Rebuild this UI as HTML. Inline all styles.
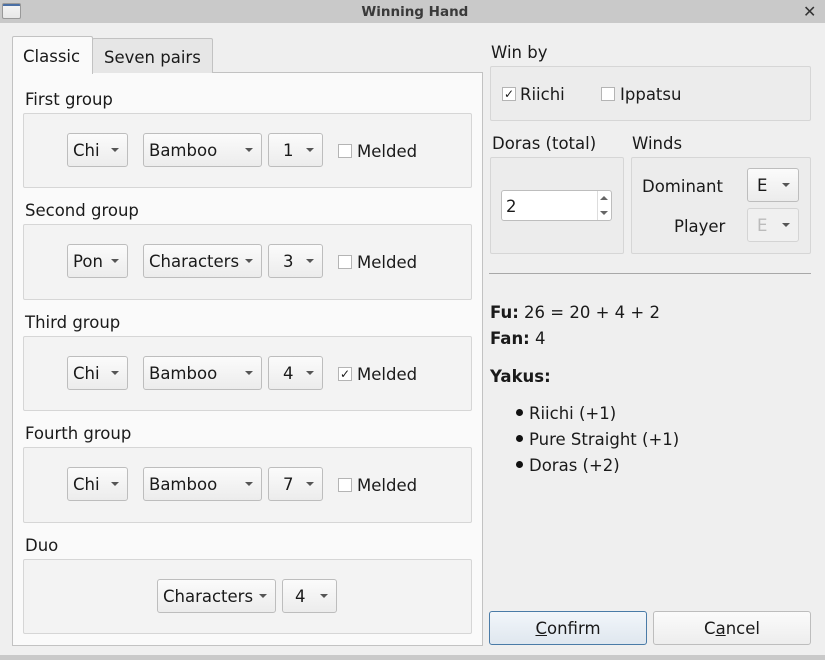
<!DOCTYPE html>
<html><head><meta charset="utf-8"><style>
*{box-sizing:border-box;margin:0;padding:0}
body{width:825px;height:660px;overflow:hidden;background:#efefef;font-family:"DejaVu Sans","Liberation Sans",sans-serif;font-size:16.5px;color:#1a1a1a;position:relative}
.a{position:absolute}
.t{position:absolute;white-space:nowrap;line-height:20px;margin-top:1px}
.box{position:absolute;border:1px solid #d6d6d6;border-radius:2px;background:#f3f3f3}
.cb{position:absolute;height:34px;border:1px solid #bdbdbd;border-radius:3px;background:linear-gradient(#fbfbfb,#ececec);line-height:34px;padding-left:5px;white-space:nowrap}
.cb:after{content:"";position:absolute;right:8px;top:14px;border-left:4px solid transparent;border-right:4px solid transparent;border-top:4px solid #555}
.chk{position:absolute;width:14px;height:14px;border:1px solid #b4b4b4;background:#fff;font-size:12px;line-height:12px;text-align:center}
.btn{position:absolute;height:34px;border:1px solid #bdbdbd;border-radius:3px;background:linear-gradient(#fbfbfb,#ededed);text-align:center;line-height:34px}
.bul{display:inline-block;width:7px;height:7px;border-radius:50%;background:#111;margin-right:6px;vertical-align:middle;position:relative;top:-2px}
</style></head><body>
<div class="a" style="left:0;top:0;width:825px;height:23px;background:#c9c9c9"></div>
<div class="a" style="left:2px;top:3px;width:19px;height:16px;border:1px solid #999;border-radius:2px;background:linear-gradient(#4a6fa5 0,#4a6fa5 2px,#f4f4f4 2px,#e8e8e8)"></div>
<div class="t" style="left:0;width:825px;text-align:center;top:2px;font-weight:bold;font-size:13.5px;color:#3a3a3a;margin:0">&nbsp;Winning Hand</div>
<div class="t" style="left:803px;top:1px;font-weight:bold;font-size:16px;color:#333">✕</div>
<div class="a" style="left:0;top:655px;width:825px;height:5px;background:#c9c9c9"></div>

<div class="a" style="left:12px;top:72px;width:471px;height:574px;border:1px solid #c2c2c2;background:#fafafa"></div>
<div class="a" style="left:92px;top:38px;width:121px;height:35px;border:1px solid #c2c2c2;border-bottom:none;background:#e6e6e6;border-radius:2px 2px 0 0"></div>
<div class="a" style="left:12px;top:36px;width:81px;height:38px;border:1px solid #c2c2c2;border-bottom:none;background:#fafafa;border-radius:2px 2px 0 0"></div>
<div class="t" style="left:23px;top:46px">Classic</div>
<div class="t" style="left:104px;top:47px">Seven pairs</div>

<div class="t" style="left:25px;top:89px">First group</div>
<div class="box" style="left:23px;top:113px;width:449px;height:75px"></div>
<div class="cb" style="left:67px;top:133px;width:61px">Chi</div>
<div class="cb" style="left:143px;top:133px;width:119px">Bamboo</div>
<div class="cb" style="left:268px;top:133px;width:55px;padding-left:14px">1</div>
<div class="chk" style="left:338px;top:144px"></div><div class="t" style="left:357px;top:141px">Melded</div>

<div class="t" style="left:25px;top:200px">Second group</div>
<div class="box" style="left:23px;top:224px;width:449px;height:76px"></div>
<div class="cb" style="left:67px;top:244px;width:61px">Pon</div>
<div class="cb" style="left:143px;top:244px;width:119px">Characters</div>
<div class="cb" style="left:268px;top:244px;width:55px;padding-left:14px">3</div>
<div class="chk" style="left:338px;top:255px"></div><div class="t" style="left:357px;top:252px">Melded</div>

<div class="t" style="left:25px;top:312px">Third group</div>
<div class="box" style="left:23px;top:336px;width:449px;height:75px"></div>
<div class="cb" style="left:67px;top:356px;width:61px">Chi</div>
<div class="cb" style="left:143px;top:356px;width:119px">Bamboo</div>
<div class="cb" style="left:268px;top:356px;width:55px;padding-left:14px">4</div>
<div class="chk" style="left:338px;top:367px">✓</div><div class="t" style="left:357px;top:364px">Melded</div>

<div class="t" style="left:25px;top:423px">Fourth group</div>
<div class="box" style="left:23px;top:447px;width:449px;height:76px"></div>
<div class="cb" style="left:67px;top:467px;width:61px">Chi</div>
<div class="cb" style="left:143px;top:467px;width:119px">Bamboo</div>
<div class="cb" style="left:268px;top:467px;width:55px;padding-left:14px">7</div>
<div class="chk" style="left:338px;top:478px"></div><div class="t" style="left:357px;top:475px">Melded</div>

<div class="t" style="left:25px;top:535px">Duo</div>
<div class="box" style="left:23px;top:559px;width:449px;height:75px"></div>
<div class="cb" style="left:157px;top:579px;width:119px">Characters</div>
<div class="cb" style="left:282px;top:579px;width:55px;padding-left:12px">4</div>

<div class="t" style="left:491px;top:42px">Win by</div>
<div class="box" style="left:490px;top:66px;width:321px;height:55px;background:#ececec"></div>
<div class="chk" style="left:502px;top:87px">✓</div><div class="t" style="left:520px;top:84px">Riichi</div>
<div class="chk" style="left:601px;top:87px"></div><div class="t" style="left:620px;top:84px">Ippatsu</div>

<div class="t" style="left:492px;top:133px">Doras (total)</div>
<div class="box" style="left:490px;top:157px;width:134px;height:97px;background:#ececec"></div>
<div class="a" style="left:501px;top:190px;width:111px;height:31px;border:1px solid #bdbdbd;border-radius:3px;background:#fff"></div>
<div class="a" style="left:597px;top:191px;width:1px;height:29px;background:#ddd"></div>
<div class="a" style="left:600px;top:196px;border-left:4px solid transparent;border-right:4px solid transparent;border-bottom:4px solid #666"></div>
<div class="a" style="left:600px;top:211px;border-left:4px solid transparent;border-right:4px solid transparent;border-top:4px solid #666"></div>
<div class="t" style="left:506px;top:196px">2</div>

<div class="t" style="left:632px;top:133px">Winds</div>
<div class="box" style="left:631px;top:157px;width:180px;height:97px;background:#ececec"></div>
<div class="t" style="left:642px;top:176px">Dominant</div>
<div class="cb" style="left:747px;top:168px;width:52px;padding-left:9px">E</div>
<div class="t" style="left:674px;top:216px">Player</div>
<div class="cb" style="left:747px;top:208px;width:52px;padding-left:9px;color:#bbb;border-color:#d4d4d4;background:#f0f0f0">E</div>

<div class="a" style="left:489px;top:273px;width:322px;height:1px;background:#a8a8a8"></div>
<div class="t" style="left:490px;top:302px"><b>Fu:</b> 26 = 20 + 4 + 2</div>
<div class="t" style="left:490px;top:328px"><b>Fan:</b> 4</div>
<div class="t" style="left:490px;top:366px"><b>Yakus:</b></div>
<div class="t" style="left:516px;top:403px"><span class="bul"></span>Riichi (+1)</div>
<div class="t" style="left:516px;top:429px"><span class="bul"></span>Pure Straight (+1)</div>
<div class="t" style="left:516px;top:455px"><span class="bul"></span>Doras (+2)</div>

<div class="btn" style="left:489px;top:611px;width:158px;border-color:#4a7ba7;background:linear-gradient(#f2f6fa,#dfe7ef)"><u>C</u>onfirm</div>
<div class="btn" style="left:653px;top:611px;width:158px">C<u>a</u>ncel</div>
</body></html>
